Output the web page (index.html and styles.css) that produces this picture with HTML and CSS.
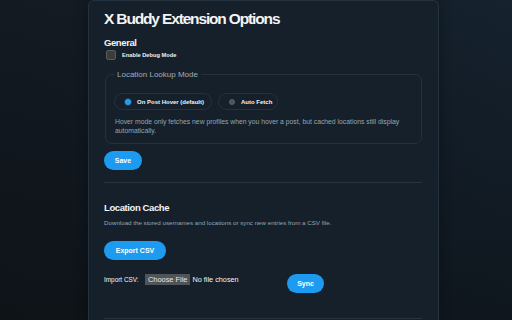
FILE: index.html
```html
<!DOCTYPE html>
<html lang="en">
<head>
<meta charset="utf-8">
<title>X Buddy Extension Options</title>
<link rel="stylesheet" href="styles.css">
</head>
<body>
<main class="card">
  <h1 class="title">X Buddy Extension Options</h1>
  <section class="section">
    <h2 class="heading">General</h2>
    <label class="check-row"><span class="checkbox"></span><span class="check-label">Enable Debug Mode</span></label>
    <fieldset class="mode">
      <legend class="mode-legend">Location Lookup Mode</legend>
      <div class="pills">
        <label class="pill pill-hover"><span class="radio radio-on"></span><span>On Post Hover (default)</span></label>
        <label class="pill pill-auto"><span class="radio"></span><span>Auto Fetch</span></label>
      </div>
      <p class="hint">Hover mode only fetches new profiles when you hover a post, but cached locations still display automatically.</p>
    </fieldset>
    <button class="btn btn-save">Save</button>
  </section>
  <hr class="divider">
  <section class="section">
    <h2 class="heading heading-cache">Location Cache</h2>
    <p class="desc">Download the stored usernames and locations or sync new entries from a CSV file.</p>
    <button class="btn btn-export">Export CSV</button>
    <div class="import-row">
      <span class="import-label">Import CSV:</span>
      <span class="file-input"><span class="file-btn">Choose File</span><span class="file-text">No file chosen</span></span>
      <button class="btn btn-sync">Sync</button>
    </div>
  </section>
  <hr class="divider divider-bottom">
</main>
</body>
</html>
```
FILE: styles.css
```css
* { box-sizing: border-box; }
html, body { height: 100%; }
body {
  margin: 0;
  overflow: hidden;
  font-family: "Liberation Sans", Arial, sans-serif;
  color: #e7e9ea;
  background:
    linear-gradient(180deg, rgba(10, 13, 16, 0) 0%, rgba(10, 13, 16, 0.55) 100%),
    linear-gradient(90deg, #131a22 0%, #141c25 50%, #15222f 100%);
}
.card {
  margin-left: 88px;
  width: 351px;
  height: 100vh;
  overflow: hidden;
  background: #15202b;
  border: 1px solid #243240;
  border-bottom: 0;
  border-radius: 6px 6px 0 0;
  padding: 9px 16px 0 15px;
  box-shadow: 0 0 12px rgba(0, 0, 0, 0.35);
}
.title {
  margin: 0;
  font-size: 15.5px;
  line-height: 18px;
  font-weight: 700;
  letter-spacing: -1.15px;
  color: #f2f4f5;
}
.heading {
  margin: 9px 0 0;
  font-size: 9.5px;
  line-height: 11px;
  font-weight: 700;
  letter-spacing: -0.4px;
  color: #f2f4f5;
}
.check-row {
  display: flex;
  align-items: center;
  gap: 6px;
  margin: 2px 0 0 2px;
}
.checkbox {
  width: 10px;
  height: 10px;
  border-radius: 2px;
  background: #3c3c3c;
  border: 1px solid #5a5a5a;
}
.check-label {
  font-size: 5.7px;
  font-weight: 700;
  color: #f2f4f5;
}
.mode {
  margin: 10px 0 0 1px;
  padding: 14px 8px 8px 8px;
  border: 1px solid #25323e;
  border-radius: 7px;
  min-width: 0;
}
.mode-legend {
  padding: 0 3px;
  margin-left: 0;
  font-size: 8px;
  color: #a4adb6;
}
.pills {
  display: flex;
  gap: 6px;
}
.pill {
  display: flex;
  align-items: center;
  gap: 6px;
  height: 17px;
  padding: 0 0 0 10px;
  border: 1px solid #25323e;
  border-radius: 9px;
  font-size: 6px;
  font-weight: 700;
  color: #f2f4f5;
}
.pill-hover { width: 98px; }
.pill-auto { width: 60px; padding-left: 10px; }
.radio {
  width: 6px;
  height: 6px;
  border-radius: 50%;
  background: #4e5357;
  border: 1px solid #5c6165;
}
.radio-on {
  background: #1d9bf0;
  border-color: #3aa7f2;
  box-shadow: 0 0 0 1px rgba(29, 155, 240, 0.25);
}
.hint {
  margin: 7px 0 0 1px;
  font-size: 6.8px;
  line-height: 9px;
  color: #9aa4ae;
}
.btn {
  display: inline-flex;
  align-items: center;
  justify-content: center;
  height: 19px;
  padding: 0 9px;
  border: 0;
  border-radius: 10px;
  background: #1d9bf0;
  color: #ffffff;
  font-family: "Liberation Sans", Arial, sans-serif;
  font-size: 7px;
  font-weight: 700;
}
.btn-save {
  margin-top: 7px;
  width: 38px;
}
.btn-export {
  margin-top: 14px;
  width: 62px;
}
.divider {
  margin: 12px 0 0;
  border: 0;
  border-top: 1px solid #253240;
}
.heading-cache {
  margin-top: 19px;
}
.desc {
  margin: 6px 0 0;
  font-size: 6.2px;
  line-height: 8px;
  color: #9aa4ae;
}
.import-row {
  display: flex;
  align-items: flex-start;
  margin-top: 14px;
}
.import-label {
  width: 41px;
  font-size: 6.4px;
  line-height: 11px;
  color: #f2f4f5;
}
.file-input {
  display: flex;
  align-items: center;
  width: 142px;
  height: 11px;
}
.file-btn {
  display: inline-flex;
  align-items: center;
  height: 11px;
  padding: 0 3px;
  background: #505458;
  color: #e6e6e6;
  font-size: 7.4px;
}
.file-text {
  margin-left: 2px;
  font-size: 7.3px;
  color: #f2f4f5;
}
.btn-sync {
  width: 37px;
}
.divider-bottom {
  margin-top: 25px;
}
```
